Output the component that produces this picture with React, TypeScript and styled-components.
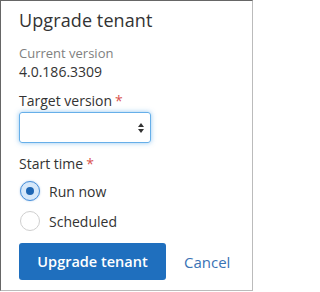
import * as React from 'react';
import styled, { createGlobalStyle } from 'styled-components';

const GlobalStyle = createGlobalStyle`
	html, body {
		margin: 0;
		padding: 0;
		background: #fff;
	}
	body {
		font-family: "Open Sans", "Noto Sans", Arial, sans-serif;
		color: #333;
	}
`;

const Panel = styled.div`
	box-sizing: border-box;
	width: 253px;
	height: 291px;
	border-top: solid 1px #666;
	border-left: solid 1px #666;
	border-right: solid 1px #bbb;
	border-bottom: solid 1px #bbb;
	padding: 7px 18px 0 18px;
	display: flex;
	flex-direction: column;
`;

const Title = styled.h2`
	margin: 0;
	font-size: 18px;
	font-weight: 400;
	line-height: 24px;
	color: #333;
	letter-spacing: 0.1px;
`;

const Field = styled.div<{ gap: number }>`
	display: flex;
	flex-direction: column;
	margin-top: ${(p) => p.gap}px;
`;

const Caption = styled.span`
	font-size: 13px;
	line-height: 17px;
	color: #808080;
`;

const Value = styled.span`
	font-size: 14px;
	line-height: 19px;
	color: #333;
`;

const Label = styled.label`
	font-size: 14px;
	line-height: 19px;
	color: #333;
`;

const Required = styled.span`
	color: #d9534f;
	margin-left: 3px;
`;

const SelectBox = styled.div`
	box-sizing: border-box;
	margin-top: 2px;
	width: 132px;
	height: 31px;
	border: solid 1px #66afe9;
	border-radius: 3px;
	box-shadow: 0 0 5px rgba(102, 175, 233, 0.7);
	display: flex;
	align-items: center;
	justify-content: flex-end;
	padding-right: 6px;
`;

const RadioGroup = styled.div`
	display: flex;
	flex-direction: column;
	margin-top: 3px;
`;

const RadioRow = styled.div`
	display: flex;
	align-items: center;
	gap: 9px;
	height: 30px;
`;

const RadioCircle = styled.span<{ checked?: boolean }>`
	box-sizing: border-box;
	width: 20px;
	height: 20px;
	border-radius: 50%;
	margin-left: 1px;
	border: solid 1px ${(p) => (p.checked ? '#4a90d9' : '#cfcfcf')};
	background: ${(p) => (p.checked ? '#d6e8fa' : '#fff')};
	box-shadow: ${(p) => (p.checked ? '0 0 2px rgba(74,144,217,0.5)' : 'none')};
	display: flex;
	align-items: center;
	justify-content: center;

	&::after {
		content: '';
		display: ${(p) => (p.checked ? 'block' : 'none')};
		width: 8px;
		height: 8px;
		border-radius: 50%;
		background: #1e66b4;
	}
`;

const RadioText = styled.span`
	font-size: 14px;
	color: #333;
`;

const Actions = styled.div`
	display: flex;
	align-items: center;
	gap: 18px;
	margin-top: 7px;
`;

const PrimaryButton = styled.button`
	width: 147px;
	height: 37px;
	border: none;
	border-radius: 3px;
	background: #1f6fbe;
	color: #fff;
	font-family: inherit;
	font-size: 14.5px;
	font-weight: 600;
	cursor: pointer;
`;

const LinkButton = styled.button`
	border: none;
	background: none;
	padding: 0;
	color: #3a73b5;
	font-family: inherit;
	font-size: 15px;
	cursor: pointer;
`;

const SortArrows = () => (
	<svg width="6" height="10" viewBox="0 0 6 10">
		<path d="M3 0 L6 4 H0 Z" fill="#333" />
		<path d="M3 10 L6 6 H0 Z" fill="#333" />
	</svg>
);

const App = () => {
	return (
		<>
			<GlobalStyle />
			<Panel>
				<Title>Upgrade tenant</Title>
				<Field gap={13}>
					<Caption>Current version</Caption>
					<Value>4.0.186.3309</Value>
				</Field>
				<Field gap={10}>
					<Label>
						Target version<Required>*</Required>
					</Label>
					<SelectBox>
						<SortArrows />
					</SelectBox>
				</Field>
				<Field gap={11}>
					<Label>
						Start time<Required>*</Required>
					</Label>
					<RadioGroup>
						<RadioRow>
							<RadioCircle checked />
							<RadioText>Run now</RadioText>
						</RadioRow>
						<RadioRow>
							<RadioCircle />
							<RadioText>Scheduled</RadioText>
						</RadioRow>
					</RadioGroup>
				</Field>
				<Actions>
					<PrimaryButton>Upgrade tenant</PrimaryButton>
					<LinkButton>Cancel</LinkButton>
				</Actions>
			</Panel>
		</>
	);
};

export default App;
